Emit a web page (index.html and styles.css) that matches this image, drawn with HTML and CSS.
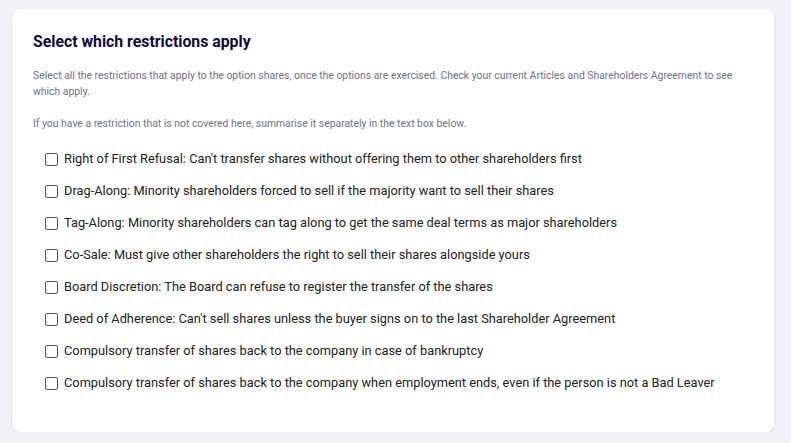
FILE: index.html
```html
<!DOCTYPE html>
<html lang="en">
<head>
  <meta charset="UTF-8">
  <meta name="viewport" content="width=device-width, initial-scale=1.0">
  <title>Restrictions</title>
  <link rel="stylesheet" href="styles.css">
</head>
<body>
  <div class="card">
    <h2>Select which restrictions apply</h2>
    <p class="hint">Select all the restrictions that apply to the option shares, once the options are exercised. Check your current Articles and Shareholders Agreement to see which apply.</p>
    <p class="hint">If you have a restriction that is not covered here, summarise it separately in the text box below.</p>

    <!-- Restriction options -->
    <div class="options">
      <label class="option"><input type="checkbox"> Right of First Refusal: Can't transfer shares without offering them to other shareholders first</label>
      <label class="option"><input type="checkbox"> Drag-Along: Minority shareholders forced to sell if the majority want to sell their shares</label>
      <label class="option"><input type="checkbox"> Tag-Along: Minority shareholders can tag along to get the same deal terms as major shareholders</label>
      <label class="option"><input type="checkbox"> Co-Sale: Must give other shareholders the right to sell their shares alongside yours</label>
      <label class="option"><input type="checkbox"> Board Discretion: The Board can refuse to register the transfer of the shares</label>
      <label class="option"><input type="checkbox"> Deed of Adherence: Can't sell shares unless the buyer signs on to the last Shareholder Agreement</label>
      <label class="option"><input type="checkbox"> Compulsory transfer of shares back to the company in case of bankruptcy</label>
      <label class="option"><input type="checkbox"> Compulsory transfer of shares back to the company when employment ends, even if the person is not a Bad Leaver</label>
    </div>
  </div>
</body>
</html>
```

FILE: styles.css
```css
/* Global Styles */
body {
  font-family: Roboto, "Liberation Sans", sans-serif;
  background-color: #f3f2f6;
  color: #222;
  margin: 0;
  padding: 9px 17px 0 12px;
}

.card {
  background-color: white;
  border-radius: 8px;
  box-shadow: 0 1px 3px rgba(0, 0, 0, 0.12);
  padding: 23px 21px 30px 21px;
  height: 370px;
}

h2 {
  margin: 0 0 16px 0;
  font-size: 15.8px;
  line-height: 20px;
  font-weight: 700;
  color: #0c0b3f;
}

.hint {
  margin: 0 0 16px 0;
  font-size: 10.4px;
  line-height: 16px;
  color: #6c7090;
}

/* Option list */
.options {
  display: flex;
  flex-direction: column;
  gap: 16px;
  padding-left: 12px;
  margin-top: 19px;
}

.option {
  display: flex;
  align-items: center;
  gap: 6px;
  font-size: 12.8px;
  line-height: 16px;
  color: #222;
}

.option input {
  width: 13px;
  height: 13px;
  margin: 0;
  appearance: none;
  border: 1px solid #555;
  border-radius: 2px;
  background: white;
}
```
